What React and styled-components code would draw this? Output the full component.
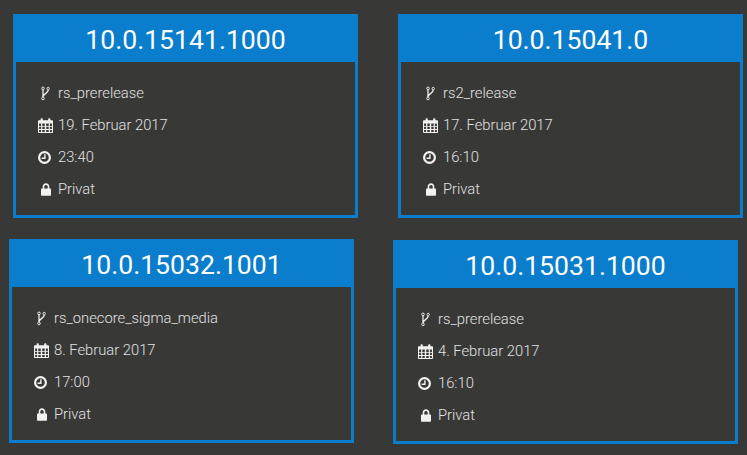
import React from 'react'
import styled, { createGlobalStyle } from 'styled-components'

const GlobalStyle = createGlobalStyle`
  html, body {
    margin: 0;
    padding: 0;
    background: #383837;
    font-family: Roboto, "Liberation Sans", sans-serif;
  }
`

const BranchIcon = () => (
  <svg width="9" height="15" viewBox="0 0 10 15" preserveAspectRatio="none" fill="none" stroke="currentColor">
    <circle cx="2.2" cy="2.4" r="1.4" strokeWidth="1" />
    <circle cx="2.2" cy="12.4" r="1.4" strokeWidth="1" />
    <circle cx="8" cy="2.6" r="1.3" strokeWidth="1" />
    <path d="M2.2 3.8V11M8 4C8 7.4 2.8 7.2 2.4 10.6" strokeWidth="1.4" />
  </svg>
)

const CalendarIcon = () => (
  <svg width="15" height="15" viewBox="0 0 15 15" fill="currentColor">
    <path fillRule="evenodd" d="M0 3.2C0 2.6.5 2.2 1 2.2H2.6V1.2C2.6.6 3.1.2 3.7.2S4.8.6 4.8 1.2V2.2H10.2V1.2C10.2.6 10.7.2 11.3.2S12.4.6 12.4 1.2V2.2H14C14.5 2.2 15 2.6 15 3.2V14C15 14.5 14.5 15 14 15H1C.5 15 0 14.5 0 14ZM1.1 5.4V7.9H3.1V5.4ZM4.3 5.4V7.9H6.8V5.4ZM8.2 5.4V7.9H10.7V5.4ZM11.9 5.4V7.9H13.9V5.4ZM1.1 8.8V11H3.1V8.8ZM4.3 8.8V11H6.8V8.8ZM8.2 8.8V11H10.7V8.8ZM11.9 8.8V11H13.9V8.8ZM1.1 11.9V14H3.1V11.9ZM4.3 11.9V14H6.8V11.9ZM8.2 11.9V14H10.7V11.9ZM11.9 11.9V14H13.9V11.9Z" />
  </svg>
)

const ClockIcon = () => (
  <svg width="15" height="13" viewBox="0 0 15 13" fill="none" stroke="currentColor">
    <circle cx="6.5" cy="6.5" r="5.4" strokeWidth="2.2" />
    <path d="M6.9 3.2V7.2H3.6" strokeWidth="1.4" />
  </svg>
)

const LockIcon = () => (
  <svg width="10" height="13" viewBox="0 0 10 13" fill="currentColor">
    <path fillRule="evenodd" d="M1.7 5.4V3.7C1.7 1.7 3.1.3 5 .3S8.3 1.7 8.3 3.7V5.4H9C9.6 5.4 10 5.8 10 6.4V11.8C10 12.4 9.6 12.8 9 12.8H1C.4 12.8 0 12.4 0 11.8V6.4C0 5.8.4 5.4 1 5.4ZM3.3 5.4H6.7V3.7C6.7 2.6 6.1 1.9 5 1.9S3.3 2.6 3.3 3.7Z" />
  </svg>
)

const builds = [
  { version: '10.0.15141.1000', branch: 'rs_prerelease', date: '19. Februar 2017', time: '23:40' },
  { version: '10.0.15041.0', branch: 'rs2_release', date: '17. Februar 2017', time: '16:10' },
  { version: '10.0.15032.1001', branch: 'rs_onecore_sigma_media', date: '8. Februar 2017', time: '17:00' },
  { version: '10.0.15031.1000', branch: 'rs_prerelease', date: '4. Februar 2017', time: '16:10' },
]

const BuildCard = ({ build, $left, $top }) => (
  <Card $left={$left} $top={$top}>
    <Title>{build.version}</Title>
    <Details>
      <Row><IconSlot><BranchIcon /></IconSlot>{build.branch}</Row>
      <Row><IconSlot><CalendarIcon /></IconSlot>{build.date}</Row>
      <Row><IconSlot><ClockIcon /></IconSlot>{build.time}</Row>
      <Row><IconSlot><LockIcon /></IconSlot>Privat</Row>
    </Details>
  </Card>
)

const App = () => (
  <>
    <GlobalStyle />
    <Page>
      <CardRow $top={14}>
        <BuildCard build={builds[0]} $left={13} />
        <BuildCard build={builds[1]} $left={40} />
      </CardRow>
      <CardRow $top={21}>
        <BuildCard build={builds[2]} $left={9} />
        <BuildCard build={builds[3]} $left={39} $top={1} />
      </CardRow>
    </Page>
  </>
)

export default App

const Page = styled.div`
  width: 747px;
  height: 455px;
  overflow: hidden;
`

const CardRow = styled.div`
  display: flex;
  align-items: flex-start;
  margin-top: ${(p) => p.$top}px;
`

const Card = styled.section`
  box-sizing: border-box;
  width: 345px;
  height: 204px;
  flex: none;
  margin-left: ${(p) => p.$left}px;
  margin-top: ${(p) => p.$top || 0}px;
  border: 3px solid #0a7dcc;
  border-top: 0;
`

const Title = styled.h2`
  margin: 0 -3px;
  height: 48px;
  background: #0a7dcc;
  color: #fff;
  font-size: 26.6px;
  font-weight: 400;
  line-height: 51px;
  text-align: center;
`

const Details = styled.div`
  display: flex;
  flex-direction: column;
  padding: 15px 0 0 22px;
`

const Row = styled.div`
  display: flex;
  align-items: center;
  height: 32px;
  color: #e2e2e2;
  font-size: 14.75px;
  font-weight: 300;
`

const IconSlot = styled.span`
  display: flex;
  justify-content: center;
  align-items: center;
  width: 15px;
  margin-right: 5px;
  color: #f2f2f2;
`
